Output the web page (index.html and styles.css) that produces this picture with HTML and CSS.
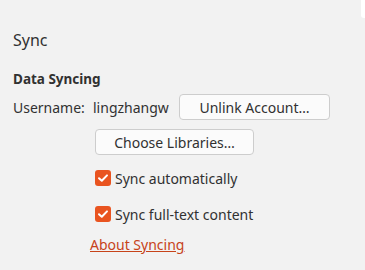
FILE: index.html
```html
<!DOCTYPE html>
<html>

<head>
	<meta charset="UTF-8">
	<title>Sync</title>
	<link rel="stylesheet" href="styles.css">
</head>

<body>
	<div class="corner"></div>
	<div class="pane">
		<h1 class="title">Sync</h1>
		<h2 class="section-title">Data Syncing</h2>
		<div class="account-row">
			<span class="label">Username:</span>
			<span class="value">lingzhangw</span>
			<button class="btn unlink">Unlink Account…</button>
		</div>
		<div class="options">
			<button class="btn choose">Choose Libraries…</button>
			<label class="check first">
				<span class="box"><svg width="16" height="16" viewBox="0 0 16 16"><path d="M4 8.2 L6.8 10.8 L12 5.4" fill="none" stroke="#fff" stroke-width="2" stroke-linecap="round" stroke-linejoin="round"/></svg></span>
				Sync automatically
			</label>
			<label class="check">
				<span class="box"><svg width="16" height="16" viewBox="0 0 16 16"><path d="M4 8.2 L6.8 10.8 L12 5.4" fill="none" stroke="#fff" stroke-width="2" stroke-linecap="round" stroke-linejoin="round"/></svg></span>
				Sync full-text content
			</label>
			<a class="about" href="#">About Syncing</a>
		</div>
	</div>
</body>

</html>
```

FILE: styles.css
```css
body,
html {
	margin: 0;
	padding: 0;
	background: #f2f2f2;
	font-family: 'Noto Sans', sans-serif;
	color: #313131;
	overflow: hidden;
}

* {
	box-sizing: border-box;
}

.corner {
	position: absolute;
	top: 0;
	right: 0;
	width: 4px;
	height: 18px;
	background: #ffffff;
	border-bottom-left-radius: 3px;
}

.pane {
	padding: 0 13px;
}

.title {
	margin: 30px 0 0;
	font-size: 16px;
	line-height: 20px;
	font-weight: normal;
}

.section-title {
	margin: 20px 0 0;
	font-size: 13.5px;
	line-height: 18px;
	font-weight: bold;
}

.account-row {
	display: flex;
	align-items: center;
	height: 26px;
	margin-top: 6px;
	font-size: 14px;
}

.account-row .label {
	width: 80px;
}

.account-row .value {
	width: 86px;
}

.btn {
	height: 26px;
	background: #fbfbfb;
	border: 1px solid #cdcdcd;
	border-radius: 4px;
	font-family: inherit;
	font-size: 14px;
	color: #313131;
	padding: 0;
}

.btn.unlink {
	width: 151px;
}

.options {
	display: flex;
	flex-direction: column;
	align-items: flex-start;
	padding-left: 82px;
	font-size: 14px;
}

.btn.choose {
	width: 159px;
	margin-top: 9px;
}

.check {
	display: flex;
	align-items: center;
	height: 16px;
	margin-top: 20px;
	gap: 4px;
}

.check.first {
	margin-top: 15px;
}

.check .box {
	width: 16px;
	height: 16px;
	background: #e95420;
	border-radius: 3px;
	display: flex;
}

.about {
	margin: 14px 0 0 -5px;
	line-height: 18px;
	color: #c7431a;
}
```
